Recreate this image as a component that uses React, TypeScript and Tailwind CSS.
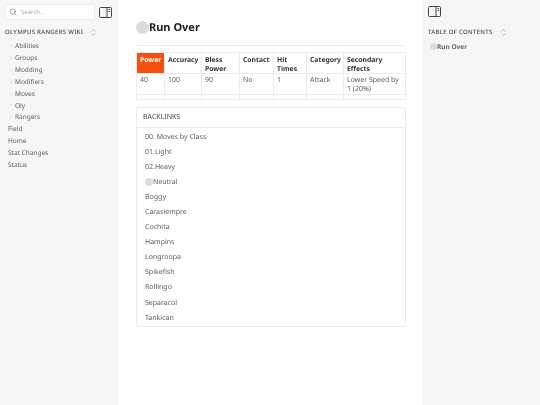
import { ChevronRight, ChevronsUpDown, Search } from "lucide-react";

const folders = ["Abilities", "Groups", "Modding", "Modifiers", "Moves", "Oly", "Rangers"];
const pages = ["Field", "Home", "Stat Changes", "Status"];
const backlinks = ["00. Moves by Class", "01.Light", "02.Heavy", "Neutral", "Boggy", "Carasiempre", "Cochita", "Hampins", "Longroopa", "Spikefish", "Rollingo", "Separacol", "Tankican"];

const headers = [
    { label: "Power", width: "w-[28px]" },
    { label: "Accuracy", width: "w-[37px]" },
    { label: "Bless Power", width: "w-[38px]" },
    { label: "Contact", width: "w-[34px]" },
    { label: "Hit Times", width: "w-[33px]" },
    { label: "Category", width: "w-[37px]" },
];
const cells = ["40", "100", "90", "No", "1", "Attack", "Lower Speed by 1 (20%)"];

function PanelIcon() {
    return (
        <svg width="13" height="11" viewBox="0 0 13 11" fill="none" stroke="#444" strokeWidth="1">
            <rect x="0.5" y="0.5" width="12" height="10" rx="1" />
            <path d="M8 0.5v10" />
            <path d="M9.5 2.5h1.5M9.5 4.5h1.5" />
        </svg>
    );
}

function Dot({ size }: { size: string }) {
    return <span className={`${size} inline-block shrink-0 rounded-full bg-[#dcdcdc]`} />;
}

export default function App() {
    return (
        <div className="flex h-[405px] w-[540px] overflow-hidden bg-white font-['Noto_Sans',sans-serif] text-[#5c5c5c] antialiased opacity-[0.999] [text-rendering:geometricPrecision] will-change-transform">
            <aside className="flex h-full w-[118px] shrink-0 flex-col bg-[#f6f6f6] pl-[5px]">
                <div className="mt-[4px] flex items-center">
                    <div className="flex h-[16px] w-[90px] items-center gap-[4px] rounded-[3px] border border-[#ececec] bg-white pl-[3px]">
                        <Search size={8} strokeWidth={1.5} className="text-[#555]" />
                        <span className="text-[6px] leading-none text-[#aaa]">Search...</span>
                    </div>
                    <div className="ml-[4px] flex"><PanelIcon /></div>
                </div>
                <div className="mt-[6px] flex h-[12px] items-center">
                    <span className="text-[6px] font-medium leading-none tracking-[0.3px] text-[#444]">OLYMPUS RANGERS WIKI</span>
                    <ChevronsUpDown size={9} strokeWidth={1} className="ml-[6px] text-[#555]" />
                </div>
                <ul className="mt-[2px] text-[6.5px] leading-[11.9px]">
                    {folders.map((name) => (
                        <li key={name} className="flex items-center pl-[3px]">
                            <ChevronRight size={6} strokeWidth={1} className="text-[#888]" />
                            <span className="ml-[1px]">{name}</span>
                        </li>
                    ))}
                    {pages.map((name) => (
                        <li key={name} className="pl-[3px]">{name}</li>
                    ))}
                </ul>
            </aside>

            <main className="min-w-0 flex-1 px-[18px]">
                <h1 className="mt-[20px] flex h-[15px] items-center text-[11px] font-bold leading-none text-[#222]">
                    <Dot size="h-[13px] w-[13px]" />
                    Run Over
                </h1>
                <div className="mt-[10px] h-px bg-[#ececec]" />

                <table className="mt-[6px] w-[270px] table-fixed border-collapse text-[7px] leading-[9px]">
                    <thead>
                        <tr className="h-[21px] align-top text-[6.8px] text-[#333]">
                            {headers.map((h, i) => (
                                <th
                                    key={h.label}
                                    className={`${h.width} border border-[#ececec] px-[3px] pt-[2px] text-left font-bold ${i === 0 ? "bg-[#f5500f] text-white" : ""}`}
                                >
                                    {h.label}
                                </th>
                            ))}
                            <th className="border border-[#ececec] px-[3px] pt-[2px] text-left font-bold">Secondary Effects</th>
                        </tr>
                    </thead>
                    <tbody>
                        <tr className="h-[21px] align-top">
                            {cells.map((c) => (
                                <td key={c} className="border border-[#ececec] px-[3px] pt-[2px]">{c}</td>
                            ))}
                        </tr>
                        <tr className="h-[5px]">
                            {cells.map((c) => (
                                <td key={c} className="border border-[#ececec]" />
                            ))}
                        </tr>
                    </tbody>
                </table>

                <section className="mt-[7px] w-[270px] rounded-[3px] border border-[#ececec]">
                    <div className="flex h-[20px] items-center border-b border-[#ececec] pl-[6px] text-[7px] leading-none text-[#444]">BACKLINKS</div>
                    <ul className="pt-[1.5px] text-[7px] leading-[15.1px]">
                        {backlinks.map((name) => (
                            <li key={name} className="flex items-center pl-[8px]">
                                {name === "Neutral" && <Dot size="h-[8px] w-[8px]" />}
                                {name}
                            </li>
                        ))}
                    </ul>
                </section>
            </main>

            <aside className="h-full w-[118px] shrink-0 bg-[#f6f6f6] pl-[6px]">
                <div className="mt-[6px] flex"><PanelIcon /></div>
                <div className="mt-[9px] flex h-[12px] items-center">
                    <span className="text-[6px] font-medium leading-none tracking-[0.3px] text-[#444]">TABLE OF CONTENTS</span>
                    <ChevronsUpDown size={9} strokeWidth={1} className="ml-[6px] text-[#555]" />
                </div>
                <div className="mt-[3px] flex items-center pl-[2px] text-[6.5px] font-bold leading-[11px] text-[#666]">
                    <Dot size="h-[7px] w-[7px]" />
                    Run Over
                </div>
            </aside>
        </div>
    );
}
